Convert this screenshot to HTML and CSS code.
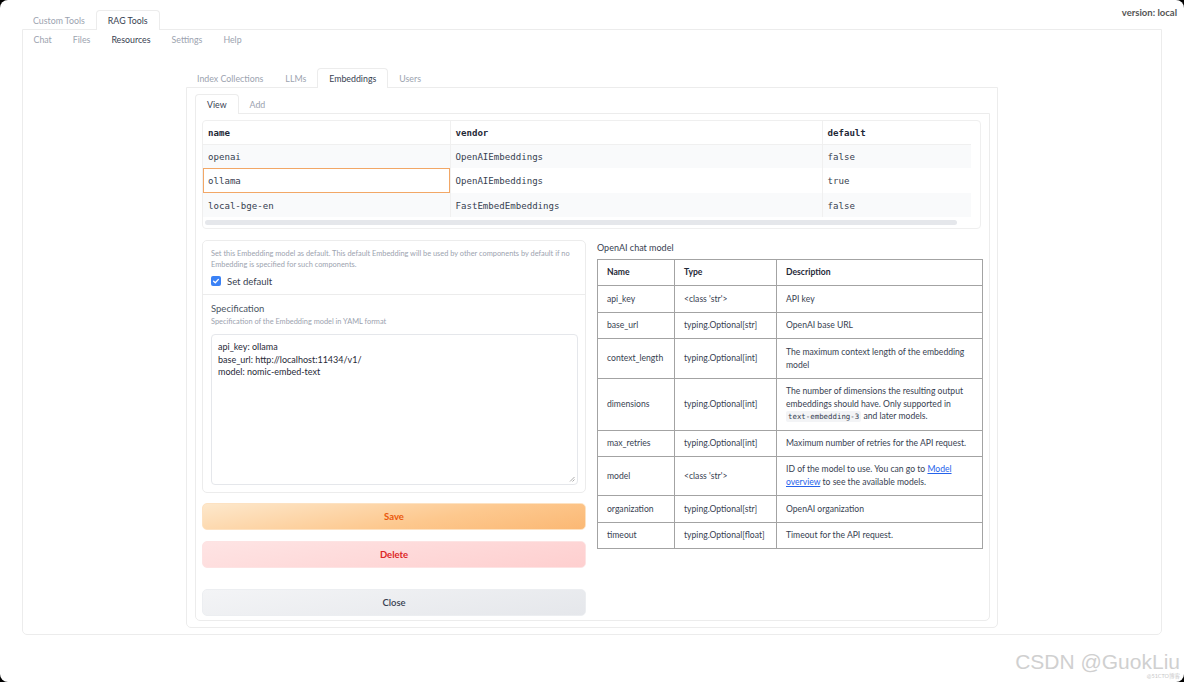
FILE: index.html
```html
<!DOCTYPE html>
<html lang="en">
<head>
<meta charset="utf-8">
<title>RAG Tools</title>
<link rel="stylesheet" href="styles.css">
</head>
<body>
<div class="page">
  <div class="topbar">
    <div class="tabs">
      <div class="tab">Custom Tools</div>
      <div class="tab active">RAG Tools</div>
    </div>
    <div class="version">version: local</div>
  </div>
  <div class="panel">
    <div class="tabs subtabs">
      <div class="tab">Chat</div>
      <div class="tab">Files</div>
      <div class="tab current">Resources</div>
      <div class="tab">Settings</div>
      <div class="tab">Help</div>
    </div>
    <div class="inner">
      <div class="tabs">
        <div class="tab">Index Collections</div>
        <div class="tab">LLMs</div>
        <div class="tab active">Embeddings</div>
        <div class="tab">Users</div>
      </div>
      <div class="inner-panel">
        <div class="tabs">
          <div class="tab active">View</div>
          <div class="tab">Add</div>
        </div>
        <div class="view-panel">
          <div class="data-wrap">
            <table class="data">
              <colgroup><col class="c-name"><col class="c-vendor"><col class="c-default"></colgroup>
              <thead>
                <tr><th>name</th><th>vendor</th><th>default</th></tr>
              </thead>
              <tbody>
                <tr class="odd"><td>openai</td><td>OpenAIEmbeddings</td><td>false</td></tr>
                <tr class="tall"><td class="selected">ollama</td><td>OpenAIEmbeddings</td><td>true</td></tr>
                <tr class="odd"><td>local-bge-en</td><td>FastEmbedEmbeddings</td><td>false</td></tr>
              </tbody>
            </table>
            <div class="scrollbar"></div>
          </div>
          <div class="columns">
            <div class="left">
              <div class="settings">
                <div class="sec">
                  <p class="desc">Set this Embedding model as default. This default Embedding will be used by other components by default if no Embedding is specified for such components.</p>
                  <label class="check">
                    <span class="box"><svg viewBox="0 0 10 10" width="10" height="10"><path d="M2.6 5.2 L4.3 6.8 L7.4 3.4" fill="none" stroke="#fff" stroke-width="1.3" stroke-linecap="round" stroke-linejoin="round"/></svg></span>
                    <span>Set default</span>
                  </label>
                </div>
                <div class="sec spec">
                  <div class="spec-title">Specification</div>
                  <div class="spec-sub">Specification of the Embedding model in YAML format</div>
                  <div class="textarea">
                    <div>api_key: ollama</div>
                    <div>base_url: http://localhost:11434/v1/</div>
                    <div>model: nomic-embed-text</div>
                    <svg class="grip" viewBox="0 0 6 6" width="6" height="6"><path d="M1 5.5 L5.5 1 M3.5 5.5 L5.5 3.5" stroke="#888" stroke-width="0.7"/></svg>
                  </div>
                </div>
              </div>
              <button class="btn save">Save</button>
              <button class="btn delete">Delete</button>
              <button class="btn close">Close</button>
            </div>
            <div class="right">
              <div class="doc-title">OpenAI chat model</div>
              <table class="doc">
                <colgroup><col class="d1"><col class="d2"><col class="d3"></colgroup>
                <thead>
                  <tr><th>Name</th><th>Type</th><th>Description</th></tr>
                </thead>
                <tbody>
                  <tr><td>api_key</td><td>&lt;class 'str'&gt;</td><td>API key</td></tr>
                  <tr><td>base_url</td><td>typing.Optional[str]</td><td>OpenAI base URL</td></tr>
                  <tr><td>context_length</td><td>typing.Optional[int]</td><td>The maximum context length of the embedding model</td></tr>
                  <tr><td>dimensions</td><td>typing.Optional[int]</td><td>The number of dimensions the resulting output embeddings should have. Only supported in <code>text-embedding-3</code> and later models.</td></tr>
                  <tr><td>max_retries</td><td>typing.Optional[int]</td><td>Maximum number of retries for the API request.</td></tr>
                  <tr><td>model</td><td>&lt;class 'str'&gt;</td><td>ID of the model to use. You can go to <a href="#">Model overview</a> to see the available models.</td></tr>
                  <tr><td>organization</td><td>typing.Optional[str]</td><td>OpenAI organization</td></tr>
                  <tr><td>timeout</td><td>typing.Optional[float]</td><td>Timeout for the API request.</td></tr>
                </tbody>
              </table>
            </div>
          </div>
        </div>
      </div>
    </div>
  </div>
</div>
<div class="watermark">CSDN @GuokLiu</div>
<div class="watermark-small">@51CTO博客</div>
</body>
</html>
```

FILE: styles.css
```css
html {
  background: #000;
}
body {
  margin: 0;
  height: 682px;
  background: #fff;
  border-radius: 8px;
  overflow: hidden;
  position: relative;
  font-family: Lato, "Noto Sans", "Noto Sans CJK SC", sans-serif;
  color: #374151;
}
.page {
  padding: 10px 22px 0;
}
.topbar {
  display: flex;
}
.version {
  margin-left: auto;
  margin-right: -15px;
  margin-top: -3px;
  font-size: 9.5px;
  font-weight: 700;
  color: #555;
}
.tabs {
  display: flex;
  height: 19px;
  position: relative;
  z-index: 1;
}
.tab {
  box-sizing: border-box;
  height: 20px;
  line-height: 19px;
  padding: 0 10px;
  font-size: 8.8px;
  color: #9ca3af;
  border: 1px solid transparent;
  border-bottom: none;
  border-radius: 4px 4px 0 0;
}
.tab.active {
  color: #374151;
  border-color: #ececec;
  background: #fff;
  padding: 0 11px;
}
.tab.current {
  color: #374151;
}
.panel {
  box-sizing: border-box;
  height: 606px;
  border: 1px solid #ececec;
  border-radius: 0 0 5px 5px;
}
.subtabs .tab {
  border: none;
  line-height: 19px;
  padding: 0 10.5px;
}
.inner {
  width: 812px;
  margin: 19px auto 0;
}
.inner-panel {
  box-sizing: border-box;
  height: 541px;
  border: 1px solid #ececec;
  border-radius: 0 0 5px 5px;
  padding: 6px 7px 0 8px;
}
.view-panel {
  box-sizing: border-box;
  height: 508px;
  border: 1px solid #ececec;
  border-radius: 0 0 5px 5px;
  padding: 6px 7px 0 6px;
}
.data-wrap {
  box-sizing: border-box;
  height: 109px;
  width: 779px;
  border: 1px solid #efefef;
  border-radius: 4px;
  overflow: hidden;
}
table.data {
  border-collapse: collapse;
  width: 768px;
  table-layout: fixed;
  font-family: "DejaVu Sans Mono", "Liberation Mono", monospace;
  font-size: 9.1px;
}
.c-name { width: 247px; }
.c-vendor { width: 372px; }
.c-default { width: 149px; }
table.data th, table.data td {
  text-align: left;
  padding: 1px 5px 0;
  height: 24px;
  border-right: 1px solid #f0f0f0;
  box-sizing: border-box;
}
table.data tr.tall td {
  height: 25px;
}
table.data th:last-child, table.data td:last-child {
  border-right: none;
}
table.data th {
  font-weight: 700;
  color: #1f2937;
  height: 23px;
  border-bottom: 1px solid #f0f0f0;
}
table.data tr.odd td {
  background: #f9fafb;
}
table.data td.selected {
  box-shadow: inset 0 0 0 1px #f2a766;
}
.scrollbar {
  height: 5px;
  margin: 3px 23px 0 2px;
  border-radius: 3px;
  background: #e5e7eb;
}
.columns {
  display: grid;
  grid-template-columns: 384px 385px;
  gap: 11px;
  margin-top: 11px;
}
.settings {
  border: 1px solid #ececec;
  border-radius: 5px;
}
.sec {
  padding: 7px 8px 8px;
}
.desc {
  margin: 0;
  font-size: 7.4px;
  line-height: 11px;
  color: #9ca3af;
}
.check {
  display: flex;
  align-items: center;
  gap: 6px;
  margin-top: 6px;
  font-size: 9.5px;
  color: #374151;
  height: 10px;
}
.box {
  width: 10px;
  height: 10px;
  border-radius: 2px;
  background: #3b82f6;
  display: flex;
}
.spec {
  border-top: 1px solid #ececec;
  padding: 7px 7px 7px 8px;
}
.spec-title {
  font-size: 9.5px;
  line-height: 13px;
  color: #4b5563;
}
.spec-sub {
  font-size: 7.4px;
  line-height: 11px;
  color: #9ca3af;
  margin-top: 1px;
}
.textarea {
  position: relative;
  box-sizing: border-box;
  height: 151px;
  margin-top: 7px;
  border: 1px solid #e5e7eb;
  border-radius: 4px;
  padding: 6px 6px;
  font-size: 9px;
  line-height: 12.6px;
  color: #1f2937;
}
.grip {
  position: absolute;
  right: 2px;
  bottom: 2px;
}
.btn {
  display: block;
  width: 100%;
  height: 27px;
  border-radius: 5px;
  font-family: inherit;
  font-size: 9.5px;
  font-weight: 700;
  border: 1px solid transparent;
}
.save {
  margin-top: 10px;
  background: linear-gradient(170deg, #fde8cc 0%, #fdc88e 60%, #fbb874 100%);
  border-color: #fde2c2;
  color: #ea580c;
}
.delete {
  margin-top: 11px;
  background: linear-gradient(170deg, #fee4e4 0%, #fecfcf 100%);
  border-color: #fde3e3;
  color: #dc2626;
}
.close {
  margin-top: 21px;
  background: linear-gradient(170deg, #f3f4f6 0%, #e5e7eb 100%);
  border-color: #eceef1;
  color: #374151;
  font-weight: 600;
}
.doc-title {
  font-size: 9px;
  line-height: 13px;
  margin-top: 1px;
  color: #374151;
}
table.doc {
  margin-top: 5px;
  width: 385px;
  border-collapse: collapse;
  table-layout: fixed;
  font-size: 8.6px;
  line-height: 12.7px;
  color: #374151;
}
.d1 { width: 77px; }
.d2 { width: 102px; }
.d3 { width: 206px; }
table.doc th, table.doc td {
  border: 1px solid #a3a3a3;
  padding: 6.4px 9px;
  text-align: left;
  vertical-align: middle;
}
table.doc th {
  font-weight: 700;
  color: #1f2937;
}
table.doc code {
  font-family: "DejaVu Sans Mono", "Liberation Mono", monospace;
  font-size: 7.4px;
  line-height: 10px;
  background: #f3f4f6;
  padding: 1px 2px;
  border-radius: 2px;
}
table.doc a {
  color: #2563eb;
}
.watermark {
  position: absolute;
  right: 4px;
  bottom: 8px;
  font-family: "Liberation Sans", Arial, sans-serif;
  font-size: 21px;
  color: #d0d0d0;
}
.watermark-small {
  position: absolute;
  right: 4px;
  bottom: 2px;
  font-size: 5.5px;
  color: #c8c8c8;
}
```
